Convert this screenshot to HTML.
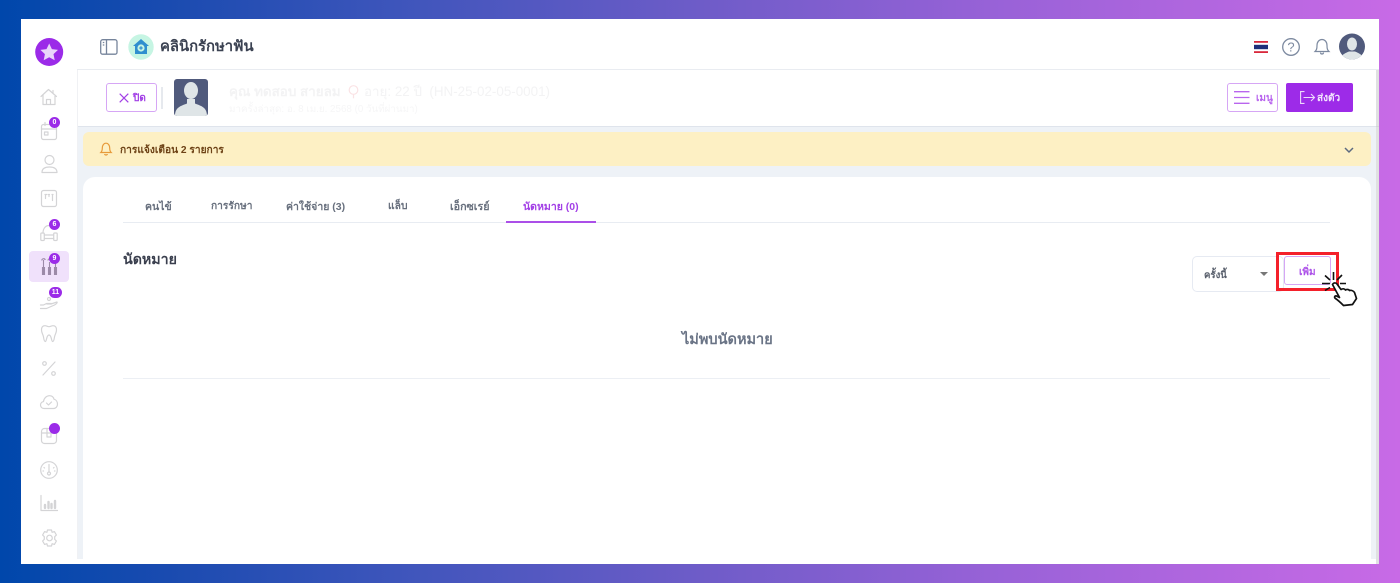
<!DOCTYPE html>
<html lang="th"><head><meta charset="utf-8"><title>คลินิกรักษาฟัน</title>
<style>
*{box-sizing:border-box}
html,body{margin:0;padding:0;width:1400px;height:583px;overflow:hidden}
body{position:relative;background:linear-gradient(90deg,#0047ab 0%,#1a4bb0 12%,#3d55bb 28%,#6e5cc8 50%,#9a62d8 72%,#c86ae6 100%);font-family:"Liberation Sans","Noto Sans CJK SC",sans-serif;color:#333}
.a{position:absolute}
.t{position:absolute;white-space:nowrap;line-height:1;filter:blur(.3px)}
.badge{position:absolute;background:#9b2be8;border-radius:50%;color:#fff;font-size:7px;font-weight:700;text-align:center;width:11px;height:11px;line-height:11px}
svg{position:absolute;overflow:visible;filter:blur(.25px)}
.ic{fill:none;stroke:#d4d4d6;stroke-width:1.2;stroke-linecap:round;stroke-linejoin:round}
</style></head><body>
<div class="a" style="left:21px;top:19px;width:1358px;height:545px;background:#fff"></div>
<div class="a" style="left:77px;top:127px;width:1299px;height:432px;background:#eef2f7"></div>
<div class="a" style="left:77px;top:23px;width:1302px;height:47px;background:#fff;border-bottom:1px solid #e9ecf1"></div>
<div class="a" style="left:77px;top:70px;width:1302px;height:57px;background:#fff;border-bottom:1px solid #dfe4ec"></div>
<div class="a" style="left:21px;top:23px;width:56px;height:541px;background:#fff"></div>
<div class="a" style="left:77px;top:70px;width:1px;height:489px;background:#f0f1f4"></div>

<!-- sidebar -->
<svg style="left:35px;top:38px" width="29" height="29" viewBox="0 0 29 29"><circle cx="14.2" cy="14" r="14" fill="#9b2be8"/><path d="M14.2 5.5l2.7 5.6 6.1.8-4.5 4.2 1.2 6.100-5.500-3-5.500 3 1.200-6.100-4.500-4.200 6.100-.8z" fill="#e9d5fa"/></svg>
<svg class="ic" style="left:40px;top:88px" width="18" height="18" viewBox="0 0 18 18"><path d="M1 8.500L8.500 1.500 16.500 8.500M3 7v9.500h12V7M6.500 16.500v-5h4v5M13 2.500v2.500"/></svg>
<svg class="ic" style="left:41px;top:122px" width="16" height="18" viewBox="0 0 16 18"><rect x=".5" y="2.500" width="15" height="15" rx="2"/><path d="M.5 7h15M4 .5v3"/><rect x="3.500" y="10" width="3.500" height="3"/></svg>
<svg class="ic" style="left:41px;top:155px" width="17" height="18" viewBox="0 0 17 18"><circle cx="8.500" cy="5" r="4.500"/><path d="M1 17.500c0-4 3-5.500 7.500-5.500s7.500 1.500 7.500 5.500z"/></svg>
<svg class="ic" style="left:41px;top:190px" width="16" height="17" viewBox="0 0 16 17"><rect x=".5" y=".5" width="15" height="16" rx="2"/><path d="M4.500 4.500v4M8 4.500v2M11.500 4.500v6M4 4.500h2M7.500 4.500h1M11 4.500h1"/></svg>
<svg class="ic" style="left:40px;top:224px" width="18" height="17" viewBox="0 0 18 17"><path d="M3 9c0-5 3-7.500 6-7.500"/><rect x=".8" y="9" width="3.500" height="7.500" rx="1"/><rect x="13.700" y="9" width="3.500" height="7.500" rx="1"/><path d="M4.300 11h9.400M4.300 14.500h9.400"/></svg>
<div class="a" style="left:29px;top:251px;width:40px;height:31px;background:#f0e1fb;border-radius:4px"></div>
<svg style="left:41px;top:257px;fill:none;stroke:#9c8aa8;stroke-width:1.100" width="17" height="19" viewBox="0 0 17 19"><path d="M2.500 3v7M8.500 5v5M14.500 5v5M.8 3.500c0-2 3-2.500 3.400-.5M7 3.500a1.700 1.700 0 1 1 3.400 0M13 3.500a1.700 1.700 0 1 1 3.400 0"/><path d="M1.500 10.500h2v7h-2zM7.500 10.500h2v7h-2zM13.500 10.500h2v7h-2z" fill="#9c8aa8"/></svg>
<svg class="ic" style="left:40px;top:297px" width="18" height="13" viewBox="0 0 18 13"><path d="M.5 11.500h6l8-3.500c2-1 3-2.500 2.500-3l-6 2H7M.5 8h3l3-1.500h5"/><circle cx="9" cy="2" r="1.500"/></svg>
<svg class="ic" style="left:41px;top:325px" width="16" height="18" viewBox="0 0 16 18"><path d="M4 .7c1.500 0 2.500 1 4 1s2.500-1 4-1c2.500 0 3.500 2 3.500 4.300 0 3-1.500 4-2 7-.3 2-.6 4.500-1.800 4.500-1.500 0-1-6.500-3.700-6.500s-2.200 6.500-3.700 6.500C3.100 16.500 2.800 14 2.500 12 2 9 .5 8 .5 5 .5 2.700 1.500.7 4 .7z"/></svg>
<svg class="ic" style="left:42px;top:361px" width="14" height="15" viewBox="0 0 14 15"><path d="M13 1L1 14"/><circle cx="2.500" cy="2.500" r="1.800"/><circle cx="11.500" cy="12.500" r="1.800"/></svg>
<svg class="ic" style="left:40px;top:395px" width="18" height="14" viewBox="0 0 18 14"><path d="M4 13.500C2 13.500.5 12 .5 10S2 6.800 3.500 6.500C4 3 6.500.7 9.500.7c2.500 0 4 1.500 4.500 3.500 2 .5 3.500 2.500 3.500 5 0 2.500-1.800 4.300-4 4.300zM6.500 8l2 2 3-3"/></svg>
<svg class="ic" style="left:41px;top:428px" width="16" height="16" viewBox="0 0 16 16"><rect x=".5" y=".5" width="15" height="15" rx="3"/><path d="M.5 5h15M6 .5V9h4V.5"/></svg>
<svg class="ic" style="left:40px;top:461px" width="18" height="18" viewBox="0 0 18 18"><circle cx="9" cy="9" r="8.300"/><circle cx="9" cy="12.500" r="1.500"/><path d="M9 11V3.500M4 6.500l.5.5M14 6.500l-.5.500M3 10h.5M15 10h-.5"/></svg>
<svg class="ic" style="left:40px;top:495px" width="18" height="17" viewBox="0 0 18 17"><path d="M1 .5V15.500h16.500"/><path d="M5 10v3M8.500 7v6M11.500 9v4M15 6v7" stroke-width="2.400"/></svg>
<svg class="ic" style="left:41px;top:529px" width="17" height="18" viewBox="0 0 17 18"><path d="M6.500 1h4l.6 2.300 2.300-.7 2 3.400-1.700 1.700v2.600L15.400 12l-2 3.400-2.300-.7-.6 2.300h-4l-.6-2.300-2.300.7-2-3.400 1.700-1.700V7.700L1.600 6l2-3.400 2.300.7z"/><circle cx="8.500" cy="9" r="2.800"/></svg>
<div class="badge" style="left:49px;top:117px">0</div>
<div class="badge" style="left:49px;top:219px">6</div>
<div class="badge" style="left:49px;top:253px">9</div>
<div class="badge" style="left:49px;top:287px;width:13px;border-radius:6px">11</div>
<div class="badge" style="left:49px;top:423px"></div>

<!-- top bar -->
<svg style="left:100px;top:39px;fill:none;stroke:#76849b;stroke-width:1.300" width="18" height="16" viewBox="0 0 18 16"><rect x=".7" y=".7" width="16.300" height="14.500" rx="2"/><path d="M6.500.7v14.500M2.800 3.500h1.500M2.800 6h1.500"/></svg>
<svg style="left:128px;top:34px" width="26" height="26" viewBox="0 0 26 26"><circle cx="13" cy="13" r="12.700" fill="#c6f5e3"/><path d="M13 5L5 12h2v8h12v-8h2z" fill="#2f8fcf"/><circle cx="13" cy="14" r="3.600" fill="#c6f5e3"/><path d="M13 12.300v3.400M11.300 14h3.400" stroke="#2f8fcf" stroke-width="1.200"/></svg>
<div class="t" style="left:160px;top:40px;font-size:14.800px;font-weight:700;color:#3b4252">คลินิกรักษาฟัน</div>
<svg style="left:1254px;top:41px" width="14" height="12" viewBox="0 0 14 12"><rect width="14" height="12" fill="#fff"/><rect width="14" height="1.800" fill="#d8283c"/><rect y="10.200" width="14" height="1.800" fill="#d8283c"/><rect y="3.800" width="14" height="4.400" fill="#1f2f7a"/></svg>
<svg style="left:1282px;top:38px;fill:none;stroke:#7d8aa0;stroke-width:1.300" width="18" height="18" viewBox="0 0 18 18"><circle cx="9" cy="9" r="8.300"/><text x="9" y="13.500" text-anchor="middle" font-size="13" fill="#7d8aa0" stroke="none" font-family="Liberation Sans">?</text></svg>
<svg style="left:1314px;top:38px;fill:none;stroke:#7d8aa0;stroke-width:1.200" width="16" height="18" viewBox="0 0 16 18"><path d="M1 13.500c1.500-1.500 2-2.500 2-6C3 4 5 1.500 8 1.500s5 2.500 5 6c0 3.500.5 4.500 2 6zM6.500 14.500c0 2 3 2 3 0"/></svg>
<svg style="left:1339px;top:33px" width="26" height="27" viewBox="0 0 26 27"><defs><clipPath id="c"><circle cx="13" cy="13.500" r="13"/></clipPath></defs><circle cx="13" cy="13.500" r="13" fill="#505a7c"/><g clip-path="url(#c)"><ellipse cx="13" cy="11" rx="5" ry="6.500" fill="#dfe5e7"/><path d="M2 27c0-6 5-7 8-8.500h6c3 1.500 8 2.500 8 8.500z" fill="#dfe5e7"/></g></svg>

<!-- patient bar -->
<div class="a" style="left:106px;top:83px;width:51px;height:29px;border:1px solid #d6a6f5;border-radius:3px"></div>
<svg style="left:119px;top:93px;fill:none;stroke:#a23fe6;stroke-width:1.200" width="10" height="10" viewBox="0 0 10 10"><path d="M.7.7l8.600 8.600M9.300.7L.7 9.300"/></svg>
<div class="t" style="left:133px;top:94px;font-size:10px;font-weight:700;color:#a23fe6">ปิด</div>
<div class="a" style="left:161px;top:87px;width:2px;height:22px;background:#e6e9ee"></div>
<svg style="left:174px;top:79px" width="34" height="37" viewBox="0 0 34 37"><defs><clipPath id="d"><rect width="34" height="37" rx="3"/></clipPath></defs><g clip-path="url(#d)"><rect width="34" height="37" fill="#505a7c"/><ellipse cx="17" cy="11.500" rx="7" ry="8.500" fill="#dfe5e7"/><path d="M1 37c0-9 6-10 12-12.500V20h8v4.500c6 2.500 12 3.500 12 12.500z" fill="#dfe5e7"/></g></svg>
<div class="t" style="left:229px;top:85px;font-size:13.400px;font-weight:700;color:#f3f3f4">คุณ ทดสอบ สายลม</div>
<svg style="left:348px;top:85px;fill:none;stroke:#fae3e5;stroke-width:1.200" width="11" height="14" viewBox="0 0 11 14"><circle cx="5.500" cy="5" r="4.300"/><path d="M5.500 9.300v4"/></svg>
<div class="t" style="left:364px;top:85px;font-size:13.400px;color:#f3f3f4">อายุ: 22 ปี &nbsp;(HN-25-02-05-0001)</div>
<div class="t" style="left:229px;top:105px;font-size:9.800px;color:#f6f6f7">มาครั้งล่าสุด: อ. 8 เม.ย. 2568 (0 วันที่ผ่านมา)</div>
<div class="a" style="left:1227px;top:83px;width:51px;height:29px;border:1px solid #d6a6f5;border-radius:3px"></div>
<svg style="left:1234px;top:91px;fill:none;stroke:#b965ee;stroke-width:1.300" width="16" height="13" viewBox="0 0 16 13"><path d="M0 .7h15.500M0 6.500h15.500M0 12.300h15.500"/></svg>
<div class="t" style="left:1256px;top:94px;font-size:10px;font-weight:700;color:#b965ee">เมนู</div>
<div class="a" style="left:1286px;top:83px;width:67px;height:29px;background:#9d2be8;border-radius:2px"></div>
<svg style="left:1300px;top:91px;fill:none;stroke:#ecd9fb;stroke-width:1.100" width="15" height="13" viewBox="0 0 15 13"><path d="M4.500.6H.6v11.800h3.900M3.500 6.500h11M11 3l3.500 3.500L11 10"/></svg>
<div class="t" style="left:1317px;top:94px;font-size:10px;font-weight:700;color:#f3e8fd">ส่งตัว</div>

<!-- alert -->
<div class="a" style="left:83px;top:132px;width:1288px;height:34px;background:#fdf0c4;border-radius:6px"></div>
<svg style="left:100px;top:142px;fill:none;stroke:#e79a3a;stroke-width:1.200" width="12" height="14" viewBox="0 0 12 14"><path d="M.8 10.500c1-1 1.500-2 1.500-4.500S3.800 1.200 6 1.200 9.700 3.500 9.700 6s.5 3.500 1.500 4.500zM4.700 12c0 1.300 2.600 1.300 2.600 0"/></svg>
<div class="t" style="left:120px;top:146px;font-size:10.200px;font-weight:700;color:#6e4317">การแจ้งเตือน 2 รายการ</div>
<svg style="left:1344px;top:147px;fill:none;stroke:#5c6a80;stroke-width:1.500" width="10" height="7" viewBox="0 0 10 7"><path d="M1 1l4 4 4-4"/></svg>

<!-- card -->
<div class="a" style="left:83px;top:177px;width:1288px;height:382px;background:#fff;border-radius:12px 12px 0 0"></div>
<div class="a" style="left:123px;top:222px;width:1207px;height:1px;background:#e8ecf2"></div>
<div class="t" style="left:145px;top:202px;font-size:10.500px;font-weight:700;color:#68707e">คนไข้</div>
<div class="t" style="left:211px;top:202px;font-size:10.200px;font-weight:700;color:#68707e">การรักษา</div>
<div class="t" style="left:286px;top:202px;font-size:10.500px;font-weight:700;color:#68707e">ค่าใช้จ่าย (3)</div>
<div class="t" style="left:388px;top:202px;font-size:10.300px;font-weight:700;color:#68707e">แล็บ</div>
<div class="t" style="left:450px;top:202px;font-size:10.700px;font-weight:700;color:#68707e">เอ็กซเรย์</div>
<div class="t" style="left:523px;top:202px;font-size:10.500px;font-weight:700;color:#a23fe6">นัดหมาย (0)</div>
<div class="a" style="left:506px;top:221px;width:90px;height:1.500px;background:#ab4fe8"></div>
<div class="t" style="left:123px;top:253px;font-size:14.200px;font-weight:700;color:#3a3f4e">นัดหมาย</div>
<div class="a" style="left:1192px;top:256px;width:92px;height:36px;border:1px solid #e6eaf2;border-radius:5px"></div>
<div class="t" style="left:1204px;top:271px;font-size:9.600px;font-weight:700;color:#555c69">ครั้งนี้</div>
<div class="a" style="left:1260px;top:272px;width:0;height:0;border-left:4px solid transparent;border-right:4px solid transparent;border-top:4px solid #777"></div>
<div class="a" style="left:1276px;top:252px;width:63px;height:39px;border:3px solid #f4202a"></div>
<div class="a" style="left:1284px;top:256px;width:47px;height:29px;background:#fff;border:1px solid #d6a6f5;border-radius:3px"></div>
<div class="t" style="left:1299px;top:268px;font-size:10px;font-weight:700;color:#ab4fe8">เพิ่ม</div>
<svg style="left:1320px;top:270px" width="38" height="38" viewBox="0 0 38 38"><path d="M2 13.500h8M5 5.500l5 4.500M13.500 2v8M22 5l-5 5M20 13.500h6M5 20.500l5-3" stroke="#111" stroke-width="1.600" fill="none"/><path d="M12.500 14.500c1-2 3.500-2 4.500-.5l4 5.500c1.500-1 3.500-1 4.500.5 1.500-1 3.500-.5 4 .5 2-.5 4 .5 5 2l2 6-4 6-9 1c-3-3-5-5-8-7-1.500-1-1-3 1-2.500l3 1.500z" fill="#fff" stroke="#111" stroke-width="1.700" stroke-linejoin="round"/></svg>
<div class="t" style="left:682px;top:333px;font-size:14.500px;font-weight:700;color:#6a7486">ไม่พบนัดหมาย</div>
<div class="a" style="left:123px;top:378px;width:1207px;height:1px;background:#eceff4"></div>
<div class="a" style="left:1376px;top:70px;width:3px;height:494px;background:#c6c6ca;opacity:.55"></div>
</body></html>
